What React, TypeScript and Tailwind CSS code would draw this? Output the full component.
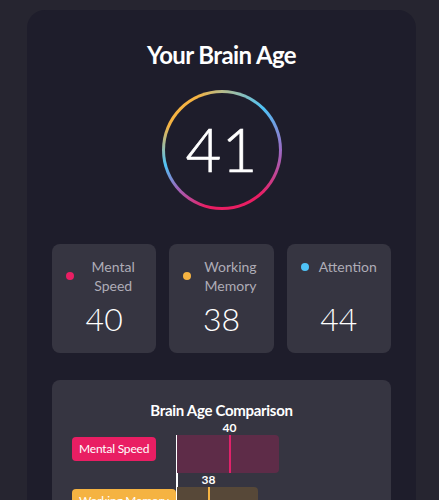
import React from "react";

const metrics = [
  { label: "Mental Speed", value: 40, dot: "bg-[#e91e63]" },
  { label: "Working Memory", value: 38, dot: "bg-[#f5b342]" },
  { label: "Attention", value: 44, dot: "bg-[#4fc3f7]" },
];

const rows = [
  { label: "Mental Speed", value: 40, badge: "bg-[#e91e63] text-white", bar: "bg-[#5e2c48]", marker: "bg-[#e0226a]", width: 102 },
  { label: "Working Memory", value: 38, badge: "bg-[#f5b342] text-white", bar: "bg-[#574838]", marker: "bg-[#f5b342]", width: 81 },
  { label: "Attention", value: 44, badge: "bg-[#4fc3f7] text-white", bar: "bg-[#34495c]", marker: "bg-[#4fc3f7]", width: 145 },
];

// px per year on the comparison chart, axis sits at age 35
const SCALE = 10.5;
const AXIS = 35;

function MetricCard({ label, value, dot }: { label: string; value: number; dot: string }) {
  return (
    <div className="h-[109px] rounded-lg bg-[#363541] px-[14px] pt-[13px] pb-[15px] flex flex-col">
      <div className="flex items-center justify-center gap-[10px]">
        <span className={`w-2 h-2 rounded-full shrink-0 ${dot}`} />
        <span className="text-[14px] leading-[19px] text-[#aeacb6] text-center">{label}</span>
      </div>
      <div className="mt-auto text-center text-[32px] leading-[38px] font-light text-white">{value}</div>
    </div>
  );
}

export default function App() {
  return (
    <div className="min-h-screen bg-[#262530] pt-[10px] pb-10 font-['Lato',sans-serif]">
      <div className="ml-[27px] w-[389px] rounded-[18px] bg-[#1e1d2b] px-[25px] pt-[29px] pb-8">
        <h1 className="text-center text-[24px] leading-8 font-bold text-white tracking-[-0.6px]">Your Brain Age</h1>

        <div className="mt-[19px] flex justify-center">
          <div className="w-[120px] h-[120px] rounded-full p-[3px] bg-[conic-gradient(from_0deg,#b7bb8a_0deg,#4fc3f7_45deg,#9b6bc4_90deg,#e91e63_140deg,#e91e63_195deg,#a062b8_228deg,#4fc3f7_255deg,#f5b342_295deg,#f5b342_335deg,#b7bb8a_360deg)]">
            <div className="w-full h-full rounded-full bg-[#1e1d2b] flex items-center justify-center">
              <span className="text-[62px] leading-none font-light text-white -mt-1 [-webkit-text-stroke:0.6px_white]">41</span>
            </div>
          </div>
        </div>

        <div className="mt-[34px] grid grid-cols-3 gap-[13px]">
          {metrics.map((m) => (
            <MetricCard key={m.label} {...m} />
          ))}
        </div>

        <div className="mt-[27px] rounded-lg bg-[#363541] px-5 pt-5 pb-6">
          <h2 className="text-center text-[15px] leading-[21px] font-bold text-white tracking-[-0.3px]">Brain Age Comparison</h2>
          <div className="relative">
            <div className="absolute left-[104px] top-[14px] bottom-0 w-[1.5px] bg-white" />
            {rows.map((r) => (
              <div key={r.label} className="h-[52px]">
                <div className="relative h-[14px]">
                  <span
                    className="absolute top-0 -translate-x-1/2 text-[12px] leading-[14px] font-bold text-white"
                    style={{ left: 105 + (r.value - AXIS) * SCALE }}
                  >
                    {r.value}
                  </span>
                </div>
                <div className="flex">
                  <div className="w-[105px] shrink-0">
                    <span className={`inline-block whitespace-nowrap rounded px-[7px] text-[12px] leading-6 tracking-[-0.2px] ${r.badge}`}>{r.label}</span>
                  </div>
                  <div className={`relative h-[38px] rounded-r ${r.bar}`} style={{ width: r.width }}>
                    <div
                      className={`absolute top-0 bottom-0 w-[2px] ${r.marker}`}
                      style={{ left: (r.value - AXIS) * SCALE - 1 }}
                    />
                  </div>
                </div>
              </div>
            ))}
          </div>
        </div>
      </div>
    </div>
  );
}
